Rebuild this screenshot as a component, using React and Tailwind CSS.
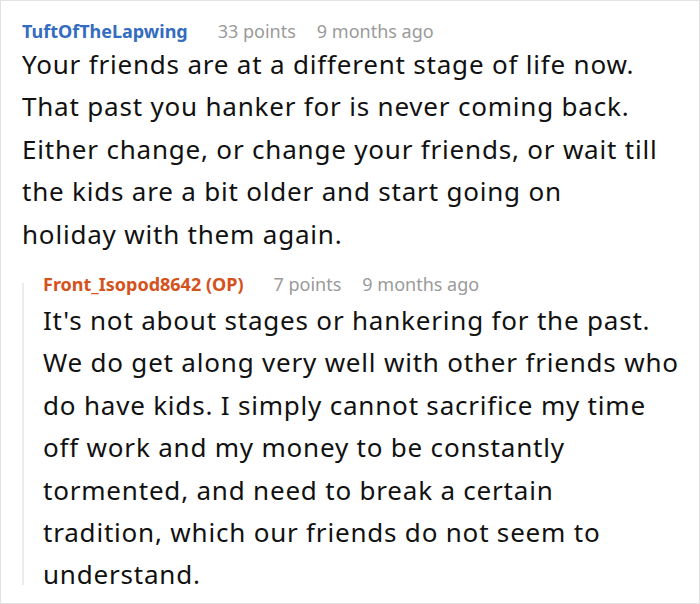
import React from "react";

const font = { fontFamily: '"Noto Sans", "Open Sans", sans-serif' };

const parent = [
  "Your friends are at a different stage of life now.",
  "That past you hanker for is never coming back.",
  "Either change, or change your friends, or wait till",
  "the kids are a bit older and start going on",
  "holiday with them again.",
];

const reply = [
  "It's not about stages or hankering for the past.",
  "We do get along very well with other friends who",
  "do have kids. I simply cannot sacrifice my time",
  "off work and my money to be constantly",
  "tormented, and need to break a certain",
  "tradition, which our friends do not seem to",
  "understand.",
];

function Meta({ name, color, points, time }) {
  return (
    <div className="flex items-center text-[18px] leading-[24px] whitespace-nowrap">
      <span className={`font-bold ${color}`}>{name}</span>
      <span className="text-[#9a9a9a] ml-[30px]">{points}</span>
      <span className="text-[#9a9a9a] ml-[21px]">{time}</span>
    </div>
  );
}

function Body({ lines, className = "" }) {
  return (
    <div className={`text-[26px] leading-[42.4px] tracking-[0.8px] text-[#111] whitespace-nowrap ${className}`}>
      {lines.map((l, i) => (
        <div key={i}>{l}</div>
      ))}
    </div>
  );
}

export default function App() {
  return (
    <div className="w-[700px] h-[604px] bg-white border border-[#e2e2e2] overflow-hidden" style={font}>
      <div className="pl-[21px] pt-[18px]">
        <Meta name="TuftOfTheLapwing" color="text-[#336cc0]" points="33 points" time="9 months ago" />
        <Body lines={parent} />
        <div className="flex mt-[17px]">
          <div className="w-[2px] bg-[#ececec] mt-[11px] h-[302px] shrink-0" />
          <div className="pl-[19px]">
            <Meta name="Front_Isopod8642 (OP)" color="text-[#d4521c]" points="7 points" time="9 months ago" />
            <Body lines={reply} className="mt-[3px]" />
          </div>
        </div>
      </div>
    </div>
  );
}
